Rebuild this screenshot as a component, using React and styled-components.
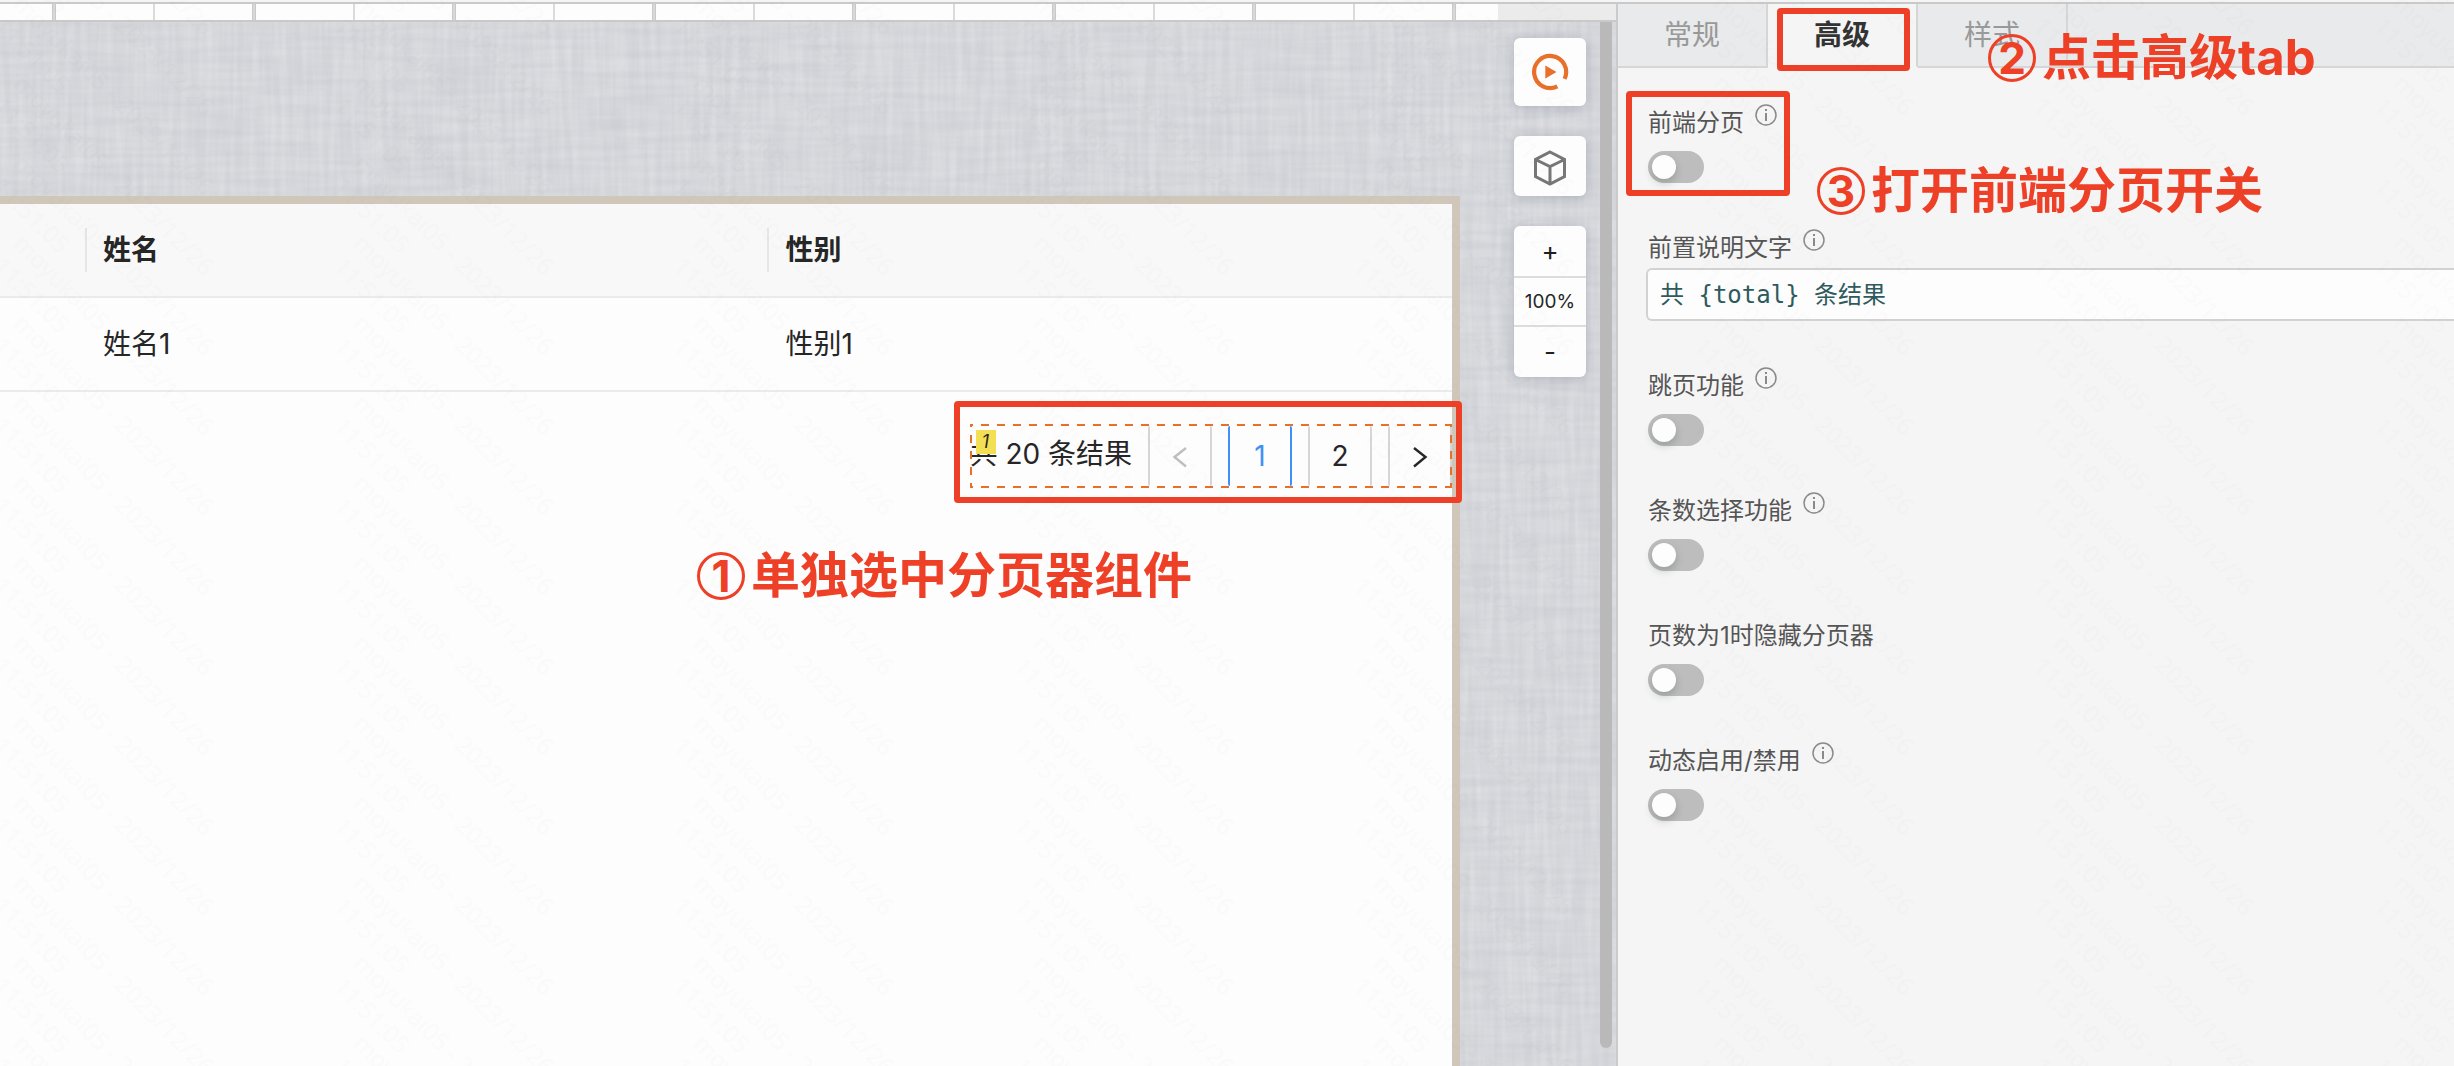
import React from "react";
import styled, { createGlobalStyle, css } from "styled-components";

const RED = "#ee4026";
const SANS = `Inter, "Noto Sans CJK SC", sans-serif`;

const GlobalStyle = createGlobalStyle`
  *, *::before, *::after { box-sizing: border-box; }
  body { margin: 0; background: #f5f5f5; font-family: ${SANS}; color: #262626; }
  button, input { font-family: inherit; margin: 0; }
`;

const Page = styled.div`
  position: relative;
  display: grid;
  grid-template-columns: minmax(0, 1fr) 838px;
  min-height: 100vh;
  padding-top: 2px;
  overflow: hidden;
`;

const Workspace = styled.main`
  position: relative;
  display: flex;
  flex-direction: column;
  border-top: 2px solid #c9c9c9;
`;

const RulerBar = styled.div`
  height: 16px;
  background: #ebebeb;
  box-sizing: content-box;
  border-bottom: 2px solid #c9c9c9;
`;

const RulerScale = styled.div`
  height: 100%;
  margin-right: 118px;
  background-color: #fdfdfd;
  background-image: linear-gradient(90deg, #c9c9c9 0 1px, #d8d8d8 1px 3px, #c9c9c9 3px 4px, transparent 4px);
  background-size: 200px 100%;
  background-repeat: repeat-x;
  background-position: 52px 0;
`;

const MinorTicks = styled.div`
  height: 100%;
  background: repeating-linear-gradient(90deg, transparent 0 153px, #dbdbdb 153px 155px, transparent 155px 200px);
`;

const Canvas = styled.div`
  position: relative;
  isolation: isolate;
  flex: 1;
  display: flex;
  align-items: stretch;
  background-color: #d4d6da;
`;

const LinenLayer = styled.svg`
  position: absolute;
  inset: 0;
  width: 100%;
  height: 100%;
  z-index: -1;
`;

const Artboard = styled.section`
  flex: 1;
  min-width: 0;
  margin-top: 174px;
  border: solid #d0c7ba;
  border-width: 8px 8px 0 0;
  background: #fdfdfd;
`;

const Table = styled.table`
  width: 100%;
  table-layout: fixed;
  border-collapse: separate;
  border-spacing: 0;
  font-size: 28px;
  line-height: 44px;
`;

const cell = css`
  height: 94px;
  padding: 0 16px;
  text-align: left;
  border-bottom: 2px solid #ebebeb;
`;

const HeadCell = styled.th`
  ${cell}
  font-weight: 600;
  background: #f8f8f8;
  ${(p) =>
    p.$divided &&
    css`
      background: linear-gradient(#e6e6e6, #e6e6e6) right center / 2px 44px no-repeat #f8f8f8;
    `}
`;

const Cell = styled.td`
  ${cell}
`;

const PagerRow = styled.div`
  display: flex;
  justify-content: flex-end;
  padding-top: 32px;
`;

const Pager = styled.nav`
  position: relative;
  display: flex;
  align-items: center;
  gap: 16px;
  height: 64px;
  font-size: 28px;

  &::after {
    content: "";
    position: absolute;
    inset: 0;
    pointer-events: none;
    background:
      linear-gradient(90deg, #e8702a 50%, transparent 50%) -5px 0 / 16px 2px repeat-x,
      linear-gradient(90deg, #e8702a 50%, transparent 50%) -5px 100% / 16px 2px repeat-x,
      linear-gradient(#e8702a 50%, transparent 50%) 0 -5px / 2px 16px repeat-y,
      linear-gradient(#e8702a 50%, transparent 50%) 100% -5px / 2px 16px repeat-y;
  }
`;

const PagerTotal = styled.span`
  line-height: 60px;
  padding-bottom: 4px;
  white-space: nowrap;
`;

const PageButton = styled.button`
  display: flex;
  align-items: center;
  justify-content: center;
  width: 64px;
  height: 60px;
  padding: 0;
  border: solid ${(p) => (p.$active ? "#4190f7" : "#d6d6d6")};
  border-width: 0 2px;
  border-radius: 2px;
  background: transparent;
  font-size: 28px;
  color: ${(p) => (p.$active ? "#4190f7" : p.disabled ? "#bfbfbf" : "#262626")};
`;

const OrderBadge = styled.span`
  position: absolute;
  left: 6px;
  top: 6px;
  width: 20px;
  height: 24px;
  background: #f3df54;
  font-size: 18px;
  font-style: italic;
  line-height: 24px;
  text-align: center;
  z-index: 1;
`;

const Highlight = styled.span`
  position: absolute;
  inset: ${(p) => p.$inset};
  border: 6px solid ${RED};
  border-radius: 4px;
  pointer-events: none;
  z-index: 2;
`;

const ToolColumn = styled.aside`
  display: flex;
  flex-direction: column;
  width: 72px;
  margin: 16px 14px 0 54px;
`;

const card = css`
  border: 0;
  border-radius: 6px;
  background: #fdfdfd;
  box-shadow: 0 2px 12px rgba(60, 70, 100, 0.25);
`;

const ToolButton = styled.button`
  ${card}
  display: flex;
  align-items: center;
  justify-content: center;
  width: 100%;
  height: ${(p) => p.$height}px;
  margin-bottom: 30px;
  padding: 0;
`;

const ZoomGroup = styled.div`
  ${card}
  overflow: hidden;
`;

const ZoomButton = styled.button`
  display: block;
  width: 100%;
  height: 50px;
  padding: 0;
  border: 0;
  background: transparent;
  color: #1f1f1f;
  font-size: 26px;
  line-height: 50px;
`;

const ZoomValue = styled.output`
  display: block;
  height: 51px;
  border: solid #dcdcdc;
  border-width: 2px 0;
  font-size: 19px;
  line-height: 48px;
  text-align: center;
`;

const ScrollTrack = styled.div`
  display: flex;
  width: 16px;
  padding-bottom: 18px;
`;

const ScrollThumb = styled.div`
  width: 12px;
  border-radius: 0 0 6px 6px;
  background: #b9b9b9;
`;

const Panel = styled.aside`
  position: relative;
  border-top: 2px solid #c9c9c9;
  border-left: 2px solid #cbcbcb;
  background: #f5f5f5;
`;

const Tabs = styled.div`
  display: flex;
  height: 64px;
  background: #e8eaeb;
`;

const Tab = styled.button`
  position: relative;
  height: 64px;
  padding: 0 46px;
  border: solid #d6d6d6;
  border-width: 0 2px 2px 0;
  background: transparent;
  font-size: 28px;
  line-height: 40px;
  color: #999;
  ${(p) =>
    p.$active &&
    css`
      border-bottom-color: transparent;
      background: #f5f5f5;
      color: #333;
      font-weight: 600;
    `}
`;

const TabFiller = styled.div`
  flex: 1;
  border-bottom: 2px solid #d6d6d6;
`;

const Fields = styled.form`
  display: flex;
  flex-direction: column;
  gap: 46px;
  padding: 36px 0 40px 30px;
`;

const FieldBox = styled.div`
  position: relative;
  display: flex;
  flex-direction: column;
  align-items: flex-start;
`;

const LabelRow = styled.div`
  position: relative;
  display: flex;
  gap: 11px;
  height: 35px;
`;

const Label = styled.label`
  align-self: flex-end;
  font-size: 24px;
  line-height: 32px;
  color: #555;
`;

const Switch = styled.input`
  appearance: none;
  width: 56px;
  height: 32px;
  margin-top: 12px;
  padding: 4px;
  border-radius: 16px;
  background: #bdbdbd;

  &::before {
    content: "";
    display: block;
    width: 24px;
    height: 24px;
    border-radius: 12px;
    background: #fdfdfd;
    box-shadow: 0 4px 8px rgba(0, 35, 11, 0.2);
  }

  &:checked {
    padding-left: 28px;
    background: #4190f7;
  }
`;

const TextInput = styled.input`
  align-self: stretch;
  height: 53px;
  margin: 4px 0 0 -2px;
  padding: 0 12px 4px;
  border: solid #d2d2d2;
  border-width: 2px 0 2px 2px;
  border-radius: 6px 0 0 6px;
  outline: 0;
  background: #fdfdfd;
  color: #2f5a5e;
  font-family: "DejaVu Sans Mono", "Noto Sans CJK SC", monospace;
  font-size: 24px;
`;

const Note = styled.p`
  position: absolute;
  left: ${(p) => p.$left}px;
  top: ${(p) => p.$top}px;
  display: flex;
  align-items: center;
  gap: 6px;
  margin: 0;
  color: ${RED};
  font-size: 49px;
  font-weight: 700;
  line-height: 64px;
  white-space: nowrap;
  z-index: 3;
`;

const NoteNumber = styled.span`
  display: inline-flex;
  align-items: center;
  justify-content: center;
  width: 48px;
  height: 48px;
  border: 3px solid ${RED};
  border-radius: 50%;
  font-size: 44px;
  line-height: 42px;
`;

const WatermarkLayer = styled.svg`
  position: absolute;
  inset: 0;
  width: 100%;
  height: 100%;
  pointer-events: none;
  z-index: 4;
`;

const InfoIcon = () => (
  <svg width="22" height="22" viewBox="0 0 22 22" fill="none" stroke="#8a8a8a" aria-hidden="true">
    <circle cx="11" cy="11" r="10" strokeWidth="1.5" />
    <path d="M11 9v8" strokeWidth="2" />
    <path d="M11 5v2" strokeWidth="2" />
  </svg>
);

const Chevron = ({ dir }) => (
  <svg width="16" height="24" viewBox="0 0 16 24" fill="none" stroke="currentColor" strokeWidth="2.4" aria-hidden="true">
    <path d={dir === "left" ? "M14 4 2.5 13 14 22.5" : "M2 4 13.5 13 2 22.5"} />
  </svg>
);

const PlayIcon = () => (
  <svg width="40" height="40" viewBox="-20 -20 40 40" aria-hidden="true">
    <path d="M7.3 14.3A16 16 0 1 1 14.6 6.8" fill="none" stroke="#e8702a" strokeWidth="4.2" />
    <path d="M-4.7-6.6 6.5 0-4.7 6.6z" fill="#e8702a" />
  </svg>
);

const CubeIcon = () => (
  <svg width="40" height="40" viewBox="-20 -22 40 40" fill="none" stroke="#777" strokeWidth="3" aria-hidden="true">
    <path d="M0-16 14.5-8.5V8.5L0 16-14.5 8.5V-8.5zM-14.5-8.5 0-1.5 14.5-8.5M0-1.5V16" />
  </svg>
);

const Linen = () => (
  <LinenLayer aria-hidden="true">
    <defs>
      <filter id="warp" x="0" y="0" width="100%" height="100%" colorInterpolationFilters="sRGB">
        <feTurbulence type="fractalNoise" baseFrequency="0.16 0.012" numOctaves="2" seed="3" />
        <feColorMatrix values="0 0 0 0 1  0 0 0 0 1  0 0 0 0 1  0.4 0 0 0 -0.12" />
      </filter>
      <filter id="weft" x="0" y="0" width="100%" height="100%" colorInterpolationFilters="sRGB">
        <feTurbulence type="fractalNoise" baseFrequency="0.012 0.14" numOctaves="2" seed="8" />
        <feColorMatrix values="0 0 0 0 0.5  0 0 0 0 0.53  0 0 0 0 0.58  0.16 0 0 0 -0.05" />
      </filter>
    </defs>
    <rect width="100%" height="100%" filter="url(#warp)" />
    <rect width="100%" height="100%" filter="url(#weft)" />
  </LinenLayer>
);

const Watermark = () => (
  <WatermarkLayer aria-hidden="true">
    <defs>
      <pattern id="watermark" x="-30" y="0" width="340" height="80" patternUnits="userSpaceOnUse">
        {[-240, -160, -80, 0, 80].map((y) => (
          <g key={y} transform={`translate(42 ${y + 5}) rotate(45)`} fill="#000" fillOpacity="0.012" fontSize="24" fontFamily="Noto Sans">
            <text>moyukai05 - 2023/12/26</text>
            <text x="2" y="30">11:51:05</text>
          </g>
        ))}
      </pattern>
    </defs>
    <rect width="100%" height="100%" fill="url(#watermark)" />
  </WatermarkLayer>
);

const fields = [
  { id: "front", label: "前端分页", info: true, marked: true },
  { id: "prefix", label: "前置说明文字", info: true, text: "共 {total} 条结果" },
  { id: "jump", label: "跳页功能", info: true },
  { id: "size", label: "条数选择功能", info: true },
  { id: "hide", label: "页数为1时隐藏分页器" },
  { id: "dynamic", label: "动态启用/禁用", info: true },
];

function Field({ id, label, info, marked, text }) {
  return (
    <FieldBox>
      <LabelRow>
        <Label htmlFor={id}>{label}</Label>
        {info && <InfoIcon />}
        {marked && <Highlight $inset="-13px -13px -57px -22px" />}
      </LabelRow>
      {text ? <TextInput id={id} type="text" defaultValue={text} /> : <Switch id={id} type="checkbox" role="switch" />}
    </FieldBox>
  );
}

export default function App() {
  return (
    <>
      <GlobalStyle />
      <Page>
        <Workspace>
          <RulerBar>
            <RulerScale>
              <MinorTicks />
            </RulerScale>
          </RulerBar>
          <Canvas>
            <Linen />
            <Artboard>
              <Table>
                <colgroup>
                  <col style={{ width: 87 }} />
                  <col style={{ width: "47%" }} />
                  <col />
                </colgroup>
                <thead>
                  <tr>
                    <HeadCell $divided />
                    <HeadCell $divided>姓名</HeadCell>
                    <HeadCell>性别</HeadCell>
                  </tr>
                </thead>
                <tbody>
                  <tr>
                    <Cell />
                    <Cell>姓名1</Cell>
                    <Cell>性别1</Cell>
                  </tr>
                </tbody>
              </Table>
              <PagerRow>
                <Pager aria-label="分页">
                  <OrderBadge>1</OrderBadge>
                  <PagerTotal>共 20 条结果</PagerTotal>
                  <PageButton disabled aria-label="上一页">
                    <Chevron dir="left" />
                  </PageButton>
                  <PageButton $active>1</PageButton>
                  <PageButton>2</PageButton>
                  <PageButton aria-label="下一页">
                    <Chevron dir="right" />
                  </PageButton>
                  <Highlight $inset="-23px -10px -15px -16px" />
                </Pager>
              </PagerRow>
            </Artboard>
            <ToolColumn>
              <ToolButton $height={68} aria-label="预览">
                <PlayIcon />
              </ToolButton>
              <ToolButton $height={60} aria-label="组件">
                <CubeIcon />
              </ToolButton>
              <ZoomGroup>
                <ZoomButton>+</ZoomButton>
                <ZoomValue>100%</ZoomValue>
                <ZoomButton>-</ZoomButton>
              </ZoomGroup>
            </ToolColumn>
            <ScrollTrack>
              <ScrollThumb />
            </ScrollTrack>
          </Canvas>
          <Note $left={697} $top={540}>
            <NoteNumber>1</NoteNumber>单独选中分页器组件
          </Note>
        </Workspace>
        <Panel>
          <Tabs role="tablist">
            <Tab role="tab">常规</Tab>
            <Tab role="tab" aria-selected="true" $active>
              高级
              <Highlight $inset="4px 6px -5px 9px" />
            </Tab>
            <Tab role="tab">样式</Tab>
            <TabFiller />
          </Tabs>
          <Fields>
            {fields.map((f) => (
              <Field key={f.id} {...f} />
            ))}
          </Fields>
          <Note $left={370} $top={22}>
            <NoteNumber>2</NoteNumber>点击高级tab
          </Note>
          <Note $left={199} $top={155}>
            <NoteNumber>3</NoteNumber>打开前端分页开关
          </Note>
        </Panel>
        <Watermark />
      </Page>
    </>
  );
}
